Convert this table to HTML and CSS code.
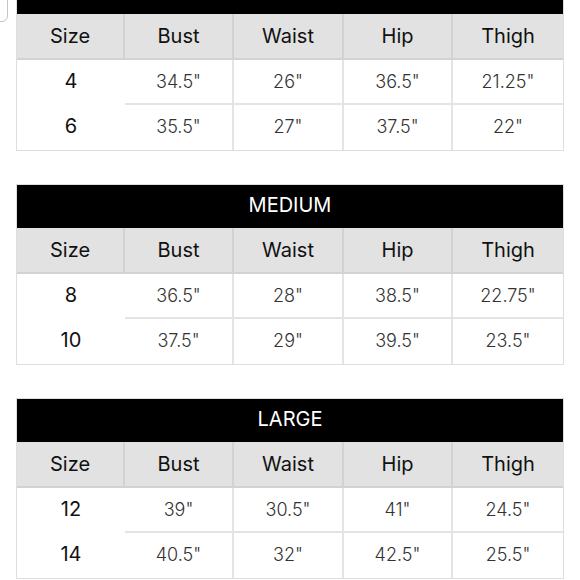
FILE: index.html
```html
<!DOCTYPE html>
<html>
<head>
<meta charset="utf-8">
<link rel="stylesheet" href="styles.css">
</head>
<body>
<div class="corner-tab"></div>
<main class="charts">
  <section class="chart first">
    <div class="title"></div>
    <div class="grid">
      <div class="hcell">Size</div><div class="hcell">Bust</div><div class="hcell">Waist</div><div class="hcell">Hip</div><div class="hcell last">Thigh</div>
      <div class="size">4</div><div class="val sep">34.5"</div><div class="val sep">26"</div><div class="val sep">36.5"</div><div class="val sep last">21.25"</div>
      <div class="size">6</div><div class="val">35.5"</div><div class="val">27"</div><div class="val">37.5"</div><div class="val last">22"</div>
    </div>
  </section>
  <section class="chart">
    <div class="title">MEDIUM</div>
    <div class="grid">
      <div class="hcell">Size</div><div class="hcell">Bust</div><div class="hcell">Waist</div><div class="hcell">Hip</div><div class="hcell last">Thigh</div>
      <div class="size">8</div><div class="val sep">36.5"</div><div class="val sep">28"</div><div class="val sep">38.5"</div><div class="val sep last">22.75"</div>
      <div class="size">10</div><div class="val">37.5"</div><div class="val">29"</div><div class="val">39.5"</div><div class="val last">23.5"</div>
    </div>
  </section>
  <section class="chart">
    <div class="title">LARGE</div>
    <div class="grid">
      <div class="hcell">Size</div><div class="hcell">Bust</div><div class="hcell">Waist</div><div class="hcell">Hip</div><div class="hcell last">Thigh</div>
      <div class="size">12</div><div class="val sep">39"</div><div class="val sep">30.5"</div><div class="val sep">41"</div><div class="val sep last">24.5"</div>
      <div class="size">14</div><div class="val">40.5"</div><div class="val">32"</div><div class="val">42.5"</div><div class="val last">25.5"</div>
    </div>
  </section>
</main>
</body>
</html>
```

FILE: styles.css
```css
html, body {
  margin: 0;
  padding: 0;
  background: #ffffff;
  overflow: hidden;
}
body {
  width: 580px;
  height: 580px;
  position: relative;
  font-family: Inter, "Liberation Sans", sans-serif;
}
.corner-tab {
  position: absolute;
  left: -40px;
  top: -20px;
  width: 46px;
  height: 40px;
  border: 1px solid #c4c4c4;
  border-radius: 6px;
  background: #fff;
}
.charts {
  display: flex;
  flex-direction: column;
  gap: 33px;
  padding-left: 16px;
  margin-top: -30px;
}
.chart {
  width: 546px;
  border: 1px solid #dedede;
}
.title {
  height: 43px;
  box-sizing: border-box;
  padding-bottom: 3px;
  background: #000;
  color: #fff;
  font-size: 20px;
  display: flex;
  align-items: center;
  justify-content: center;
}
.grid {
  display: grid;
  grid-template-columns: 108px 109px 110px 109px 110px;
  grid-template-rows: 46px 45px 45px;
}
.hcell {
  box-sizing: border-box;
  background: #e2e2e2;
  border-right: 2px solid #d2d2d2;
  border-bottom: 2px solid #d2d2d2;
  display: flex;
  align-items: center;
  justify-content: center;
  padding-bottom: 1px;
  font-size: 20px;
  color: #111;
}
.size {
  box-sizing: border-box;
  display: flex;
  align-items: center;
  justify-content: center;
  padding-bottom: 3px;
  font-size: 20px;
  color: #111;
}
.val {
  box-sizing: border-box;
  display: flex;
  align-items: center;
  justify-content: center;
  padding-bottom: 3px;
  font-size: 18px;
  font-weight: 300;
  color: #333;
  border-right: 2px solid #e4e4e4;
}
.val.sep {
  border-bottom: 2px solid #e4e4e4;
  padding-bottom: 1px;
}
.hcell.last, .val.last {
  border-right: none;
}
```
